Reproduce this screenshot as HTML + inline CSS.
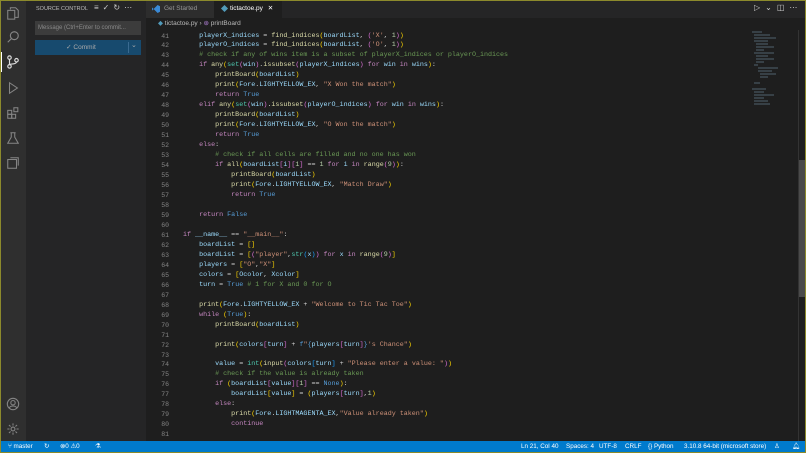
<!DOCTYPE html>
<html><head><meta charset="utf-8"><style>
*{margin:0;padding:0;box-sizing:border-box}
body{width:806px;height:453px;overflow:hidden;background:#1e1e1e;font-family:"Liberation Sans",sans-serif;position:relative}
.frame{position:absolute;inset:0;border:1px solid #8c8a2c;pointer-events:none;z-index:10}
#act{position:absolute;left:0;top:0;width:26px;height:441px;background:#2f2f2f}
#side{position:absolute;left:26px;top:0;width:120px;height:441px;background:#252526}
#tabs{position:absolute;left:146px;top:0;width:660px;height:18px;background:#252526}
#crumb{position:absolute;left:146px;top:18px;width:660px;height:12px;background:#1e1e1e;color:#bbb;font-size:6.5px;line-height:12px;padding-left:12px}
#status{position:absolute;left:0;top:441px;width:806px;height:12px;background:#007acc;color:#fff;font-size:6.3px;line-height:12px}
#status span{position:absolute;top:0}
.ln{position:absolute;left:146px;top:31.5px;width:23px;text-align:right;font-family:"Liberation Mono",monospace;font-size:6.5px;line-height:9.97px;color:#858585;white-space:pre}
.cd{position:absolute;left:183px;top:31.5px;font-family:"Liberation Mono",monospace;font-size:6.7px;line-height:9.97px;white-space:pre;color:#d4d4d4}
.k{color:#c586c0}.f{color:#dcdcaa}.v{color:#9cdcfe}.s{color:#ce9178}.b{color:#569cd6}.c{color:#6a9955}.n{color:#b5cea8}.t{color:#4ec9b0}.y{color:#ffd700}.p{color:#da70d6}.q{color:#179fff}
.ic{position:absolute;left:6px;width:14px;height:14px}
</style></head><body>
<div id="act">
<svg class="ic" style="top:6px" viewBox="0 0 16 16" fill="none" stroke="#858585" stroke-width="1.2"><path d="M5 4V2h6l3 3v8H10"/><rect x="2" y="5" width="8" height="10"/></svg>
<svg class="ic" style="top:30px" viewBox="0 0 16 16" fill="none" stroke="#858585" stroke-width="1.3"><circle cx="9.5" cy="6.5" r="4.5"/><path d="M6.3 9.7L2 14"/></svg>
<div style="position:absolute;left:0;top:52px;width:2px;height:20px;background:#fff"></div>
<svg class="ic" style="top:55px" viewBox="0 0 16 16" fill="none" stroke="#ddd" stroke-width="1.3"><circle cx="4" cy="3" r="2"/><circle cx="4" cy="13" r="2"/><circle cx="12" cy="6" r="2"/><path d="M4 5v6M12 8c0 3-8 2-8 3"/></svg>
<svg class="ic" style="top:81px" viewBox="0 0 16 16" fill="none" stroke="#858585" stroke-width="1.2"><path d="M4 2l9 6-9 6z"/></svg>
<svg class="ic" style="top:106px" viewBox="0 0 16 16" fill="none" stroke="#858585" stroke-width="1.2"><rect x="2" y="5" width="4.5" height="4.5"/><rect x="6.5" y="9.5" width="4.5" height="4.5"/><rect x="2" y="9.5" width="4.5" height="4.5"/><rect x="9" y="2" width="4.5" height="4.5"/></svg>
<svg class="ic" style="top:131px" viewBox="0 0 16 16" fill="none" stroke="#858585" stroke-width="1.2"><path d="M6 2v5l-4 7h12l-4-7V2M5 2h6"/></svg>
<svg class="ic" style="top:156px" viewBox="0 0 16 16" fill="none" stroke="#858585" stroke-width="1.2"><rect x="2" y="4" width="10" height="10"/><path d="M5 2h9v9"/></svg>
<svg class="ic" style="top:397px" viewBox="0 0 16 16" fill="none" stroke="#858585" stroke-width="1.2"><circle cx="8" cy="8" r="6.5"/><circle cx="8" cy="6.5" r="2.5"/><path d="M3.5 12.5c2-3 7-3 9 0"/></svg>
<svg class="ic" style="top:422px" viewBox="0 0 16 16" fill="none" stroke="#858585" stroke-width="1.2"><circle cx="8" cy="8" r="2.2"/><path d="M8 1.5v2.5M8 12v2.5M1.5 8h2.5M12 8h2.5M3.4 3.4l1.8 1.8M10.8 10.8l1.8 1.8M3.4 12.6l1.8-1.8M10.8 5.2l1.8-1.8"/></svg>
</div>
<div id="side">
<div style="position:absolute;left:10px;top:6px;font-size:5.5px;color:#bbb">SOURCE CONTROL</div>
<div style="position:absolute;left:68px;top:3px;font-size:8px;color:#ccc;letter-spacing:4px">≡✓↻⋯</div>
<div style="position:absolute;left:9px;top:21px;width:106px;height:14px;background:#3c3c3c;color:#8a8a8a;font-size:6px;line-height:14px;padding-left:3px">Message (Ctrl+Enter to commit...</div>
<div style="position:absolute;left:9px;top:40px;width:106px;height:15px;background:#174a6e;color:#aaa;font-size:6.5px;line-height:15px;text-align:center;padding-right:14px">✓ Commit</div>
<div style="position:absolute;left:102px;top:42px;width:1px;height:11px;background:#3a6a90"></div>
<div style="position:absolute;left:105px;top:41px;font-size:7px;color:#aaa">⌄</div>
</div>
<div id="tabs">
<div style="position:absolute;left:0;top:0;width:68px;height:18px;background:#2d2d2d;color:#969696;font-size:6.5px;line-height:18px;padding-left:18px">Get Started</div>
<div style="position:absolute;left:6px;top:5px;width:8px;height:8px;background:#3a8ad6;clip-path:polygon(70% 0,100% 15%,100% 85%,70% 100%,0 30%,0 70%)"></div>
<div style="position:absolute;left:68px;top:0;width:68px;height:18px;background:#1e1e1e;color:#fff;font-size:6.5px;line-height:18px;padding-left:16px">tictactoe.py <span style="margin-left:3px">✕</span></div>
<div style="position:absolute;left:76px;top:6px;width:5px;height:5px;background:#519aba;transform:rotate(45deg)"></div>
<div style="position:absolute;left:608px;top:3px;font-size:8px;color:#ccc;letter-spacing:5px">▷⌄◫⋯</div>
</div>
<div id="crumb"><span style="color:#519aba">◆</span> tictactoe.py › <span style="color:#b180d7">⊛</span> printBoard</div>
<div style="position:absolute;left:750px;top:30px;width:48px;height:80px;opacity:.55">
<svg width="48" height="80"><g stroke-width="1"><path d="M2 2h10M4 5h16M4 8h22M4 11h14M6 14h12M6 17h18M6 20h8M4 23h20M6 26h12M6 29h18M6 32h8M4 35h4M8 38h20M8 41h14M10 44h16M10 47h8M4 53h6M2 59h14M4 62h10M4 65h20M4 68h10M4 71h14M4 74h16" stroke="#7a9cb0"/></g></svg>
</div>
<div style="position:absolute;left:798px;top:30px;width:8px;height:411px;background:#1e1e1e;border-left:1px solid #333"></div>
<div style="position:absolute;left:799px;top:160px;width:7px;height:137px;background:#4a4a4a"></div>
<div class="ln">41
42
43
44
45
46
47
48
49
50
51
52
53
54
55
56
57
58
59
60
61
62
63
64
65
66
67
68
69
70
71
72
73
74
75
76
77
78
79
80
81</div>
<div class="cd">    <span class="v">playerX_indices</span> = <span class="f">find_indices</span><span class="y">(</span><span class="v">boardList</span>, <span class="p">(</span><span class="s">'X'</span>, <span class="n">1</span><span class="p">)</span><span class="y">)</span>
    <span class="v">playerO_indices</span> = <span class="f">find_indices</span><span class="y">(</span><span class="v">boardList</span>, <span class="p">(</span><span class="s">'O'</span>, <span class="n">1</span><span class="p">)</span><span class="y">)</span>
    <span class="c"># check if any of wins item is a subset of playerX_indices or playerO_indices</span>
    <span class="k">if</span> <span class="f">any</span><span class="y">(</span><span class="t">set</span><span class="p">(</span><span class="v">win</span><span class="p">)</span>.<span class="f">issubset</span><span class="p">(</span><span class="v">playerX_indices</span><span class="p">)</span> <span class="k">for</span> <span class="v">win</span> <span class="k">in</span> <span class="v">wins</span><span class="y">)</span>:
        <span class="f">printBoard</span><span class="y">(</span><span class="v">boardList</span><span class="y">)</span>
        <span class="f">print</span><span class="y">(</span><span class="v">Fore</span>.<span class="v">LIGHTYELLOW_EX</span>, <span class="s">"X Won the match"</span><span class="y">)</span>
        <span class="k">return</span> <span class="b">True</span>
    <span class="k">elif</span> <span class="f">any</span><span class="y">(</span><span class="t">set</span><span class="p">(</span><span class="v">win</span><span class="p">)</span>.<span class="f">issubset</span><span class="p">(</span><span class="v">playerO_indices</span><span class="p">)</span> <span class="k">for</span> <span class="v">win</span> <span class="k">in</span> <span class="v">wins</span><span class="y">)</span>:
        <span class="f">printBoard</span><span class="y">(</span><span class="v">boardList</span><span class="y">)</span>
        <span class="f">print</span><span class="y">(</span><span class="v">Fore</span>.<span class="v">LIGHTYELLOW_EX</span>, <span class="s">"O Won the match"</span><span class="y">)</span>
        <span class="k">return</span> <span class="b">True</span>
    <span class="k">else</span>:
        <span class="c"># check if all cells are filled and no one has won</span>
        <span class="k">if</span> <span class="f">all</span><span class="y">(</span><span class="v">boardList</span><span class="p">[</span><span class="v">i</span><span class="p">]</span><span class="p">[</span><span class="n">1</span><span class="p">]</span> == <span class="n">1</span> <span class="k">for</span> <span class="v">i</span> <span class="k">in</span> <span class="f">range</span><span class="p">(</span><span class="n">9</span><span class="p">)</span><span class="y">)</span>:
            <span class="f">printBoard</span><span class="y">(</span><span class="v">boardList</span><span class="y">)</span>
            <span class="f">print</span><span class="y">(</span><span class="v">Fore</span>.<span class="v">LIGHTYELLOW_EX</span>, <span class="s">"Match Draw"</span><span class="y">)</span>
            <span class="k">return</span> <span class="b">True</span>

    <span class="k">return</span> <span class="b">False</span>

<span class="k">if</span> <span class="v">__name__</span> == <span class="s">"__main__"</span>:
    <span class="v">boardList</span> = <span class="y">[]</span>
    <span class="v">boardList</span> = <span class="y">[</span><span class="p">(</span><span class="s">"player"</span>,<span class="t">str</span><span class="q">(</span><span class="v">x</span><span class="q">)</span><span class="p">)</span> <span class="k">for</span> <span class="v">x</span> <span class="k">in</span> <span class="f">range</span><span class="p">(</span><span class="n">9</span><span class="p">)</span><span class="y">]</span>
    <span class="v">players</span> = <span class="y">[</span><span class="s">"O"</span>,<span class="s">"X"</span><span class="y">]</span>
    <span class="v">colors</span> = <span class="y">[</span><span class="v">Ocolor</span>, <span class="v">Xcolor</span><span class="y">]</span>
    <span class="v">turn</span> = <span class="b">True</span> <span class="c"># 1 for X and 0 for O</span>

    <span class="f">print</span><span class="y">(</span><span class="v">Fore</span>.<span class="v">LIGHTYELLOW_EX</span> + <span class="s">"Welcome to Tic Tac Toe"</span><span class="y">)</span>
    <span class="k">while</span> <span class="y">(</span><span class="b">True</span><span class="y">)</span>:
        <span class="f">printBoard</span><span class="y">(</span><span class="v">boardList</span><span class="y">)</span>

        <span class="f">print</span><span class="y">(</span><span class="v">colors</span><span class="p">[</span><span class="v">turn</span><span class="p">]</span> + <span class="b">f</span><span class="s">"</span><span class="b">{</span><span class="v">players</span><span class="p">[</span><span class="v">turn</span><span class="p">]</span><span class="b">}</span><span class="s">'s Chance"</span><span class="y">)</span>

        <span class="v">value</span> = <span class="t">int</span><span class="y">(</span><span class="f">input</span><span class="p">(</span><span class="v">colors</span><span class="q">[</span><span class="v">turn</span><span class="q">]</span> + <span class="s">"Please enter a value: "</span><span class="p">)</span><span class="y">)</span>
        <span class="c"># check if the value is already taken</span>
        <span class="k">if</span> <span class="y">(</span><span class="v">boardList</span><span class="p">[</span><span class="v">value</span><span class="p">]</span><span class="p">[</span><span class="n">1</span><span class="p">]</span> == <span class="b">None</span><span class="y">)</span>:
            <span class="v">boardList</span><span class="y">[</span><span class="v">value</span><span class="y">]</span> = <span class="y">(</span><span class="v">players</span><span class="p">[</span><span class="v">turn</span><span class="p">]</span>,<span class="n">1</span><span class="y">)</span>
        <span class="k">else</span>:
            <span class="f">print</span><span class="y">(</span><span class="v">Fore</span>.<span class="v">LIGHTMAGENTA_EX</span>,<span class="s">"Value already taken"</span><span class="y">)</span>
            <span class="k">continue</span>
</div>
<div id="status">
<span style="left:8px">⑂ master</span>
<span style="left:44px">↻</span>
<span style="left:60px">⊗0 ⚠0</span>
<span style="left:95px">⚗</span>
<span style="left:521px">Ln 21, Col 40</span>
<span style="left:566px">Spaces: 4</span>
<span style="left:599px">UTF-8</span>
<span style="left:625px">CRLF</span>
<span style="left:648px">{} Python</span>
<span style="left:684px">3.10.8 64-bit (microsoft store)</span>
<span style="left:774px">♙</span>
<span style="left:792px">🔔︎</span>
</div>
<div class="frame"></div>
</body></html>
